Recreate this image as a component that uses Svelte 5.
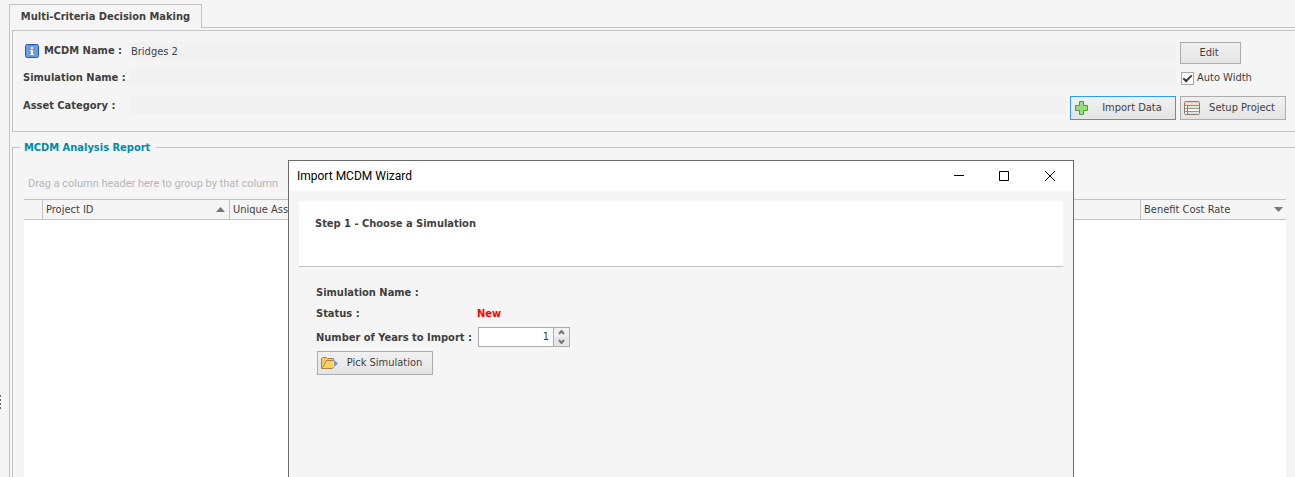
<script>
  let autoWidth = $state(true);
  let years = $state(1);
  const columns = [
    { name: 'Project ID', sort: 'up', cls: 'project' },
    { name: 'Unique Asset', sort: '', cls: 'asset' },
    { name: 'Benefit Cost Rate', sort: 'down', cls: 'rate' }
  ];
</script>

<div class="app">
  <div class="splitter"><i></i><i></i><i></i><i></i></div>
  <main>
    <div class="tabs" role="tablist">
      <button class="tab" role="tab" aria-selected="true">Multi-Criteria Decision Making</button>
    </div>
    <div class="page">
      <section class="details">
        <label class="name" for="mcdm">
          <svg width="14" height="14" viewBox="0 0 14 14" aria-hidden="true">
            <rect x=".5" y=".5" width="13" height="13" rx="2" fill="#6a9ddb" stroke="#2453ac" />
            <path d="M6 3h2v2H6zM5 6h3v4h1v1H5v-1h1V7H5z" fill="#fff" />
          </svg>
          MCDM Name :
        </label>
        <input id="mcdm" class="field wide" value="Bridges 2" readonly />
        <button class="btn edit">Edit</button>

        <label for="sim">Simulation Name :</label>
        <input id="sim" class="field wide" readonly />
        <label class="check"><input type="checkbox" bind:checked={autoWidth} />Auto Width</label>

        <label for="cat">Asset Category :</label>
        <input id="cat" class="field" readonly />
        <button class="btn icon focus">
          <svg width="16" height="16" viewBox="0 0 16 16" aria-hidden="true">
            <path d="M5.5 1.500h4v4h4v5h-4v4h-4v-4h-4v-5h4z" fill="#94e078" stroke="#4f9a3c" />
          </svg>
          <span>Import Data</span>
        </button>
        <button class="btn icon">
          <svg width="16" height="16" viewBox="0 0 16 16" aria-hidden="true">
            <rect x=".5" y="1.5" width="15" height="13" rx="1" fill="#fff" stroke="#917565" />
            <path d="M1 2h14v3H1z" fill="#ecdcc4" />
            <path d="M4 6h11v2H4zM4 12h11v2H4z" fill="#d5e8ea" />
            <path d="M1 5.5h14M1 8.5h14M1 11.5h14" stroke="#a99080" />
            <path d="M3.5 5v9" stroke="#917565" />
          </svg>
          <span>Setup Project</span>
        </button>
      </section>

      <section class="report">
        <h2>MCDM Analysis Report</h2>
        <p>Drag a column header here to group by that column</p>
        <div class="grid">
          <table>
            <thead>
              <tr>
                <th class="marker"></th>
                {#each columns as c}
                  <th class={c.cls}>
                    <div>
                      {c.name}
                      {#if c.sort}
                        <svg width="9" height="5" viewBox="0 0 9 5" aria-hidden="true">
                          <path d={c.sort === 'up' ? 'M0 5L4.5 0 9 5z' : 'M0 0h9L4.5 5z'} fill="#777" />
                        </svg>
                      {/if}
                    </div>
                  </th>
                {/each}
              </tr>
            </thead>
          </table>
        </div>
      </section>
    </div>
  </main>

  <div class="dialog" role="dialog" aria-label="Import MCDM Wizard">
    <header>
      <span>Import MCDM Wizard</span>
      <button aria-label="Minimize"><svg width="11" height="11" viewBox="0 0 11 11"><path d="M1 4.5h10" /></svg></button>
      <button aria-label="Maximize"><svg width="11" height="11" viewBox="0 0 11 11"><path d="M.5.5h9v9h-9z" /></svg></button>
      <button aria-label="Close"><svg width="11" height="11" viewBox="0 0 11 11"><path d="M0 0l10 10M10 0L0 10" /></svg></button>
    </header>
    <h3>Step 1 - Choose a Simulation</h3>
    <form onsubmit={(e) => e.preventDefault()}>
      <span>Simulation Name :</span><span></span>
      <span>Status :</span><span class="new">New</span>
      <label for="years">Number of Years to Import :</label>
      <div class="spin">
        <input id="years" type="text" bind:value={years} />
        <div class="arrows">
          <button type="button" aria-label="Increase" onclick={() => (years = +years + 1)}>
            <svg width="7" height="5" viewBox="0 0 7 5"><path d="M1 4l2.5-3L6 4" /></svg>
          </button>
          <button type="button" aria-label="Decrease" onclick={() => (years = +years - 1)}>
            <svg width="7" height="5" viewBox="0 0 7 5"><path d="M1 1l2.5 3L6 1" /></svg>
          </button>
        </div>
      </div>
      <button class="btn icon pick" type="button">
        <svg width="17" height="14" viewBox="0 0 17 14" aria-hidden="true">
          <path d="M.5 12.5v-10l1-1h4l1 1h6v2" fill="#f9cd4f" stroke="#b08050" />
          <path d="M1 12.500l3.500-8h8v7l-1 1z" fill="#fbd455" />
          <path d="M1.500 11.500l2-3 1.500-4h8" fill="none" stroke="#a5845c" />
          <path d="M.5 12.500h11l1-1.500" fill="none" stroke="#b08050" />
          <path d="M13 4l4 3.500-4 3.500z" fill="#7194ee" />
        </svg>
        <span>Pick Simulation</span>
      </button>
    </form>
  </div>
</div>

<style>
  :global(body) { margin: 0; background: #f5f5f5; }
  .app {
    position: relative;
    display: flex;
    height: 100vh;
    overflow: hidden;
    color: #3f3f3f;
    font: 11px/14px "DejaVu Sans Condensed", "DejaVu Sans", sans-serif;
  }
  button, input { font: inherit; color: inherit; margin: 0; box-sizing: border-box; border-radius: 0; }
  svg { flex: none; display: block; }
  .splitter { width: 9px; padding-top: 395px; box-sizing: border-box; flex: none; }
  .splitter i { display: block; width: 1px; height: 2px; margin-bottom: 2px; background: #666; }
  main { flex: 1; display: flex; flex-direction: column; padding-top: 4px; min-width: 0; }
  .tabs { display: flex; }
  .tabs::after { content: ''; flex: 1; border-bottom: 1px solid #c3c3c3; }
  .tab {
    height: 24px;
    width: 193px;
    padding: 0;
    border: 1px solid #c3c3c3;
    border-bottom: 0;
    background: #f5f5f5;
    font-weight: bold;
  }
  .page { flex: 1; display: flex; flex-direction: column; border-left: 1px solid #c3c3c3; padding: 2px 0 0 2px; }
  .details {
    display: grid;
    grid-template-columns: 102px 1fr 106px 106px;
    grid-template-rows: 26px 28px 24px;
    column-gap: 4px;
    align-items: start;
    padding: 11px 9px 11px 10px;
    border: 1px solid #c3c3c3;
    border-right: 0;
  }
  .details label { display: flex; align-items: center; height: 20px; font-weight: bold; white-space: nowrap; }
  .details .name { gap: 5px; padding-left: 2px; height: 18px; }
  .field { width: 100%; height: 18px; border: 0; padding: 0 2px; background: #f1f1f1; outline: 0; }
  .wide { grid-column: span 2; }
  .details .check { font-weight: normal; gap: 3px; padding-left: 1px; }
  .check input {
    appearance: none;
    width: 13px;
    height: 13px;
    border: 1px solid #a9a9a9;
    background: #fff;
    display: grid;
    place-items: center;
  }
  .check input:checked::after {
    content: '';
    width: 7px;
    height: 3px;
    border: solid #3a3a3a;
    border-width: 0 0 2px 2px;
    transform: translateY(-1px) rotate(-45deg);
  }
  .btn { border: 1px solid #acacac; background: linear-gradient(#f0f0f0, #e4e4e4); padding: 0; }
  .edit { width: 61px; height: 22px; padding-right: 3px; }
  .icon { display: flex; align-items: center; height: 24px; width: 106px; padding: 0 1px 0 3px; }
  .icon span { flex: 1; text-align: center; white-space: nowrap; }
  .focus { border-color: #3399ff; }
  .report {
    flex: 1;
    display: flex;
    flex-direction: column;
    margin-top: 15px;
    padding: 0 9px 0 11px;
    border: 1px solid #c3c3c3;
    border-width: 1px 0 0 1px;
  }
  h2 {
    align-self: flex-start;
    margin: -8px 0 0 -4px;
    padding: 0 6px 0 4px;
    background: #f5f5f5;
    color: #008ba8;
    font-size: 11px;
    line-height: 16px;
  }
  p { margin: 21px 0 8px 4px; color: #b5b5b5; font-family: Roboto, sans-serif; }
  .grid { flex: 1; background: #fff; }
  table { width: 100%; border-collapse: collapse; table-layout: fixed; }
  th { height: 19px; padding: 0 3px; border: 1px solid #c3c3c3; border-width: 1px 1px 1px 0; background: #f5f5f5; font-weight: normal; text-align: left; }
  th:last-child { border-right: 0; }
  th div { display: flex; align-items: center; justify-content: space-between; padding-right: 1px; }
  .marker { width: 12px; }
  .project { width: 180px; }
  .rate { width: 139px; }
  .rate div { padding-right: 0; }
  .dialog {
    position: absolute;
    top: 160px;
    left: 288px;
    right: 221px;
    bottom: 0;
    border: 1px solid #6b6b6b;
    border-bottom: 0;
    background: #f5f5f5;
  }
  header { display: flex; height: 30px; background: #fff; color: #000; font: 12px/30px Roboto, sans-serif; }
  header span { flex: 1; padding-left: 8px; }
  header button { width: 46px; border: 0; padding: 0; background: none; display: grid; place-items: center; }
  header path { fill: none; stroke: #000; }
  h3 { margin: 10px 10px 0 10px; padding: 16px 16px 35px; border-bottom: 1px solid #c3c3c3; background: #fff; font-size: 11px; line-height: 14px; }
  form {
    display: grid;
    grid-template-columns: 158px 1fr;
    grid-template-rows: 21px 21px 24px 24px;
    column-gap: 3px;
    padding: 18px 27px;
    font-weight: bold;
    white-space: nowrap;
  }
  form > span { line-height: 16px; }
  form label { line-height: 21px; }
  .new { color: #f00; }
  .spin { display: flex; width: 92px; height: 20px; box-sizing: border-box; border: 1px solid #acacac; background: #fff; margin-left: 1px; }
  .spin input { flex: 1; min-width: 0; border: 0; padding: 0 4px; text-align: right; outline: 0; font-weight: normal; background: #fff; }
  .arrows { display: flex; flex-direction: column; width: 15px; border-left: 1px solid #acacac; }
  .arrows button { flex: 1; padding: 0; border: 0; background: #f0f0f0; display: grid; place-items: center; }
  .arrows button + button { background: #e6e6e6; }
  .arrows path { fill: none; stroke: #777; stroke-width: 2; }
  .pick { width: 116px; margin-left: 1px; font-weight: normal; }
</style>
